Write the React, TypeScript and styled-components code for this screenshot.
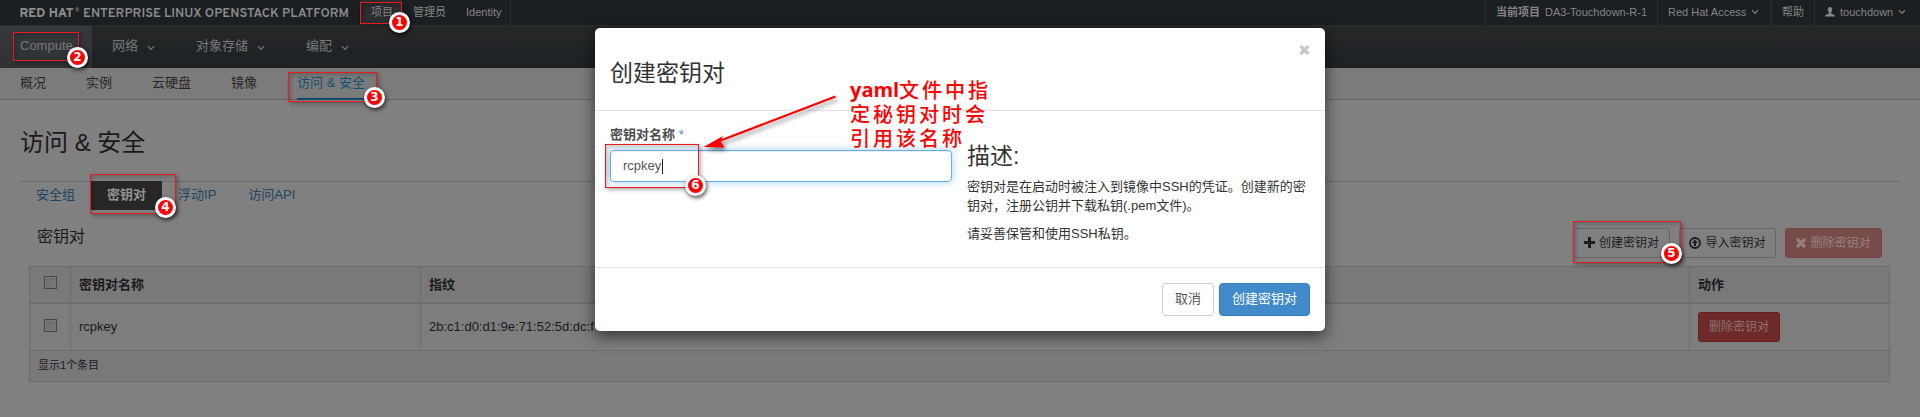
import React from "react";
import styled, { createGlobalStyle, css } from "styled-components";

const Global = createGlobalStyle`
  *, *::before, *::after { box-sizing: border-box; }
  html, body { margin: 0; padding: 0; background: #808080; overflow: hidden; }
  body { font: 13px/18px "Liberation Sans", "Noto Sans CJK SC", sans-serif; color: #1a1a1a; }
  h1, h2, h3, p { margin: 0; font-weight: 400; }
`;

const Page = styled.div`
  position: relative;
  width: 1920px;
  height: 417px;
  overflow: hidden;
  background: #808080;
`;

const TopBar = styled.header`
  display: flex;
  height: 26px;
  background: #1b1f22;
  border-bottom: 1px solid #272c2f;
  color: #848586;
  font-size: 11px;
  line-height: 24px;
`;

const Brand = styled.svg`
  flex: none;
  width: 360px;
  height: 25px;
`;

const TopTab = styled.div<{ $active?: boolean; $width: number; $divider?: boolean }>`
  width: ${(p) => p.$width}px;
  padding-left: 11px;
  white-space: nowrap;
  ${(p) => p.$active && css`background: #2b2d30;`}
  ${(p) => p.$divider && css`border-right: 1px solid #292d30;`}
`;

const TopRight = styled.div`
  display: flex;
  margin-left: auto;
`;

const TopItem = styled.div<{ $width: number }>`
  display: flex;
  align-items: center;
  gap: 5px;
  width: ${(p) => p.$width}px;
  height: 25px;
  padding: 0 0 1px 10px;
  border-left: 1px solid #292d30;
  white-space: nowrap;
`;

const MainNav = styled.nav`
  display: flex;
  height: 42px;
  background: linear-gradient(#262729, #1d2123);
  color: #777879;
`;

const NavItem = styled.div<{ $active?: boolean; $width: number }>`
  display: flex;
  align-items: center;
  gap: 9px;
  width: ${(p) => p.$width}px;
  padding: 0 0 2px 20px;
  white-space: nowrap;
  svg { margin-top: 3px; }
  ${(p) => p.$active && css`background: linear-gradient(#36383b, #2f3235);`}
`;

const SubNav = styled.nav`
  display: flex;
  gap: 40px;
  height: 32px;
  padding-left: 20px;
  background: #7b7b7b;
  border-bottom: 1px solid #686868;
`;

const SubItem = styled.div<{ $active?: boolean }>`
  height: 32px;
  line-height: 29px;
  color: #262626;
  ${(p) => p.$active && css`
    width: 70px;
    color: #124f6f;
    border-bottom: 2px solid #12496b;
  `}
`;

const Content = styled.main`
  padding: 27px 20px 0;
`;

const PageTitle = styled.h1`
  height: 54px;
  font-size: 24px;
  line-height: 32px;
`;

const Tabs = styled.div`
  display: flex;
  height: 29px;
  border-top: 1px solid #6c6c6c;
`;

const Tab = styled.div<{ $active?: boolean }>`
  height: 29px;
  margin-top: -1px;
  padding: 0 16px;
  line-height: 28px;
  color: #204462;
  ${(p) => p.$active && css`
    color: #929292;
    background: #272727;
    font-weight: 700;
  `}
`;

const Panel = styled.section`
  padding: 18px 10px 0 9px;
`;

const PanelHead = styled.div`
  display: flex;
  justify-content: space-between;
  height: 38px;
  padding: 0 8px;
`;

const PanelTitle = styled.h2`
  font-size: 16px;
  line-height: 18px;
`;

const Actions = styled.div`
  display: flex;
  gap: 9px;
`;

const ActionButton = styled.button<{ $tone?: "danger" | "faded" }>`
  display: flex;
  align-items: center;
  justify-content: center;
  gap: 4px;
  width: 97px;
  height: 30px;
  padding: 0 0 1px;
  font: 12px/18px "Liberation Sans", "Noto Sans CJK SC", sans-serif;
  color: #1d1d1d;
  background: transparent;
  border: 1px solid #666;
  border-radius: 3px;
  white-space: nowrap;
  ${(p) => p.$tone === "danger" && css`
    width: 82px;
    color: #8b7272;
    background: #6d2a28;
    border-color: #6b1f1d;
  `}
  ${(p) => p.$tone === "faded" && css`
    color: #998080;
    background: #764b4a;
    border-color: #754544;
  `}
`;

const Grid = styled.div`
  border: 1px solid #6d6d6d;
`;

const GridRow = styled.div<{ $head?: boolean }>`
  display: grid;
  grid-template-columns: 40px 350px 1fr 200px;
  height: ${(p) => (p.$head ? 37 : 47)}px;
  border-bottom: ${(p) => (p.$head ? 2 : 1)}px solid #6d6d6d;
  ${(p) => p.$head && css`
    background: #797979;
    font-weight: 700;
  `}
  ${(p) => !p.$head && css`background: #7d7d7d;`}
`;

const Cell = styled.div<{ $check?: boolean }>`
  display: flex;
  align-items: center;
  padding-left: ${(p) => (p.$check ? 14 : 8)}px;
  padding-bottom: ${(p) => (p.$check ? 4 : 0)}px;
  & + & { border-left: 1px solid #6d6d6d; }
`;

const Check = styled.span`
  width: 13px;
  height: 13px;
  border: 1px solid #484848;
  background: linear-gradient(135deg, #666a6e, #7c7c7c);
  box-shadow: inset 0 0 0 1px #7b7b7b, inset 0 0 0 2px #6c6e70;
`;

const GridFoot = styled.div`
  height: 30px;
  padding-left: 8px;
  background: #797979;
  font-size: 11px;
  line-height: 28px;
`;

const Modal = styled.section`
  position: absolute;
  left: 595px;
  top: 28px;
  width: 730px;
  height: 303px;
  background: #fff;
  border-radius: 5px;
  box-shadow: 0 5px 15px rgba(0, 0, 0, 0.6);
  color: #333;
`;

const ModalHead = styled.div`
  display: flex;
  justify-content: space-between;
  height: 83px;
  padding: 0 15px;
  border-bottom: 1px solid #e2e2e2;
`;

const ModalTitle = styled.h3`
  padding-top: 29px;
  font-size: 23px;
  line-height: 32px;
`;

const Close = styled.span`
  padding-top: 17px;
  line-height: 0;
  color: #c8c8c8;
`;

const ModalBody = styled.div`
  display: flex;
  gap: 15px;
  height: 157px;
  padding: 15px;
  border-bottom: 1px solid #e2e2e2;
`;

const Field = styled.div`
  width: 342px;
`;

const Label = styled.div`
  height: 24px;
  font-weight: 700;
  color: #4d4d4d;
  span { color: #428bca; font-weight: 400; }
`;

const Input = styled.div`
  display: flex;
  align-items: center;
  height: 32px;
  padding-left: 12px;
  border: 1px solid #66afe9;
  border-radius: 4px;
  box-shadow: inset 0 1px 1px rgba(0, 0, 0, 0.075), 0 0 8px rgba(102, 175, 233, 0.6);
  color: #555;
`;

const Caret = styled.i`
  width: 1px;
  height: 15px;
  margin-left: 1px;
  background: #222;
`;

const Help = styled.div`
  flex: 1;
  padding-top: 14px;
  line-height: 19px;
  h3 { height: 37px; font-size: 23px; line-height: 32px; }
  p { margin-bottom: 9px; white-space: nowrap; }
`;

const ModalFoot = styled.div`
  display: flex;
  justify-content: flex-end;
  gap: 5px;
  padding: 15px;
`;

const DialogButton = styled.button<{ $primary?: boolean }>`
  width: ${(p) => (p.$primary ? 91 : 52)}px;
  height: 33px;
  padding: 0 0 1px;
  font: 13px/18px "Liberation Sans", "Noto Sans CJK SC", sans-serif;
  color: ${(p) => (p.$primary ? "#fff" : "#555")};
  background: ${(p) => (p.$primary ? "#428bca" : "#fff")};
  border: 1px solid ${(p) => (p.$primary ? "#357ebd" : "#ccc")};
  border-radius: 4px;
  white-space: nowrap;
`;

const Frame = styled.div<{ $x: number; $y: number; $w: number; $h: number }>`
  position: absolute;
  left: ${(p) => p.$x}px;
  top: ${(p) => p.$y}px;
  width: ${(p) => p.$w}px;
  height: ${(p) => p.$h}px;
  border: 1px solid #e81c1c;
  box-shadow: 2px 2px 4px rgba(0, 0, 0, 0.3), inset 2px 2px 4px rgba(0, 0, 0, 0.2);
`;

const Badge = styled.div<{ $x: number; $y: number }>`
  position: absolute;
  left: ${(p) => p.$x - 10.5}px;
  top: ${(p) => p.$y - 10.5}px;
  width: 21px;
  height: 21px;
  border: 3px solid #fff;
  border-radius: 50%;
  background: #f00;
  box-shadow: 1px 2px 4px rgba(0, 0, 0, 0.7);
  color: #fff;
  font: 700 12px/15px "DejaVu Sans", sans-serif;
  text-align: center;
`;

const Note = styled.div`
  position: absolute;
  left: 850px;
  top: 78px;
  color: #f00;
  font: 500 20px/24px "Noto Sans CJK SC", sans-serif;
  letter-spacing: 3px;
  white-space: nowrap;
`;

const NoteLine = styled.div`
  display: flex;
  height: 24px;
`;

const Latin = styled.span`
  width: 49px;
  font: 700 20px/24px "Open Sans", sans-serif;
  letter-spacing: 0;
`;

const Arrow = styled.svg`
  position: absolute;
  left: 695px;
  top: 85px;
  filter: drop-shadow(2px 3px 2px rgba(0, 0, 0, 0.45));
`;

const Chevron = () => (
  <svg width="8" height="6" viewBox="0 0 8 6" fill="none" stroke="currentColor" strokeWidth="1.2">
    <path d="M1 1.2 4 4.4 7 1.2" />
  </svg>
);

const marks = [
  { n: 1, x: 360, y: 2, w: 42, h: 22, cx: 399.5, cy: 22.5 },
  { n: 2, x: 13, y: 32, w: 66, h: 29, cx: 77.5, cy: 57.5 },
  { n: 3, x: 288, y: 72, w: 89, h: 30, cx: 374.5, cy: 97.5 },
  { n: 4, x: 90, y: 174, w: 86, h: 40, cx: 165.5, cy: 207.5 },
  { n: 5, x: 1573, y: 221, w: 108, h: 42, cx: 1671.5, cy: 253.5 },
  { n: 6, x: 605, y: 144, w: 94, h: 44, cx: 695.5, cy: 185.5 },
];

export default function App() {
  return (
    <Page>
      <Global />
      <TopBar>
        <Brand viewBox="0 0 360 25" fill="#8b8c8d" fontFamily="Overpass, 'Open Sans', sans-serif" fontSize="12.5">
          <text x="19.5" y="17" fontWeight="800" textLength="54" lengthAdjust="spacingAndGlyphs">RED HAT</text>
          <text x="75" y="12" fontSize="5">®</text>
          <text x="83" y="17" fontWeight="600" textLength="266" lengthAdjust="spacingAndGlyphs">ENTERPRISE LINUX OPENSTACK PLATFORM</text>
        </Brand>
        <TopTab $active $width={42}>项目</TopTab>
        <TopTab $width={53}>管理员</TopTab>
        <TopTab $width={56} $divider>Identity</TopTab>
        <TopRight>
          <TopItem $width={172}><b>当前项目</b>DA3-Touchdown-R-1</TopItem>
          <TopItem $width={114}>Red Hat Access <Chevron /></TopItem>
          <TopItem $width={43}>帮助</TopItem>
          <TopItem $width={106}>
            <svg width="10" height="10" viewBox="0 0 10 10" fill="currentColor">
              <path d="M5 0C3.4 0 2.7 1.2 2.8 2.7c.1 1.4.6 2 1.1 2.6v1.2L.6 7.9C.1 8.2 0 8.8 0 9.6h10c0-.8-.1-1.4-.6-1.7L6.1 6.5V5.3c.5-.6 1-1.200 1.1-2.6C7.300 1.2 6.6 0 5 0z" />
            </svg>
            touchdown <Chevron />
          </TopItem>
        </TopRight>
      </TopBar>
      <MainNav>
        <NavItem $active $width={92}>Compute</NavItem>
        <NavItem $width={84}>网络<Chevron /></NavItem>
        <NavItem $width={110}>对象存储<Chevron /></NavItem>
        <NavItem $width={84}>编配<Chevron /></NavItem>
      </MainNav>
      <SubNav>
        <SubItem>概况</SubItem>
        <SubItem>实例</SubItem>
        <SubItem>云硬盘</SubItem>
        <SubItem>镜像</SubItem>
        <SubItem $active>访问 &amp; 安全</SubItem>
      </SubNav>
      <Content>
        <PageTitle>访问 &amp; 安全</PageTitle>
        <Tabs>
          <Tab>安全组</Tab>
          <Tab $active>密钥对</Tab>
          <Tab>浮动IP</Tab>
          <Tab>访问API</Tab>
        </Tabs>
        <Panel>
          <PanelHead>
            <PanelTitle>密钥对</PanelTitle>
            <Actions>
              <ActionButton>
                <svg width="11" height="11" viewBox="0 0 11 11" fill="currentColor">
                  <path d="M4 0h3v4h4v3H7v4H4V7H0V4h4z" />
                </svg>
                创建密钥对
              </ActionButton>
              <ActionButton>
                <svg width="12" height="12" viewBox="0 0 12 12" fill="none" stroke="currentColor">
                  <circle cx="6" cy="6" r="5" strokeWidth="1.8" />
                  <path d="M6 2.5 9 6H7v3H5V6H3z" fill="currentColor" stroke="none" />
                </svg>
                导入密钥对
              </ActionButton>
              <ActionButton $tone="faded">
                <svg width="10" height="10" viewBox="0 0 10 10" stroke="currentColor" strokeWidth="3.2">
                  <path d="M1 1l8 8M9 1L1 9" />
                </svg>
                删除密钥对
              </ActionButton>
            </Actions>
          </PanelHead>
          <Grid>
            <GridRow $head>
              <Cell $check><Check /></Cell>
              <Cell>密钥对名称</Cell>
              <Cell>指纹</Cell>
              <Cell>动作</Cell>
            </GridRow>
            <GridRow>
              <Cell $check><Check /></Cell>
              <Cell>rcpkey</Cell>
              <Cell>2b:c1:d0:d1:9e:71:52:5d:dc:f</Cell>
              <Cell><ActionButton $tone="danger">删除密钥对</ActionButton></Cell>
            </GridRow>
            <GridFoot>显示1个条目</GridFoot>
          </Grid>
        </Panel>
      </Content>
      <Modal>
        <ModalHead>
          <ModalTitle>创建密钥对</ModalTitle>
          <Close>
            <svg width="11" height="10" viewBox="0 0 11 10" stroke="currentColor" strokeWidth="3.2">
              <path d="M1.5 1l8 8M9.5 1l-8 8" />
            </svg>
          </Close>
        </ModalHead>
        <ModalBody>
          <Field>
            <Label>密钥对名称 <span>*</span></Label>
            <Input>rcpkey<Caret /></Input>
          </Field>
          <Help>
            <h3>描述:</h3>
            <p>密钥对是在启动时被注入到镜像中SSH的凭证。创建新的密<br />钥对，注册公钥并下载私钥(.pem文件)。</p>
            <p>请妥善保管和使用SSH私钥。</p>
          </Help>
        </ModalBody>
        <ModalFoot>
          <DialogButton>取消</DialogButton>
          <DialogButton $primary>创建密钥对</DialogButton>
        </ModalFoot>
      </Modal>
      {marks.map((m) => (
        <React.Fragment key={m.n}>
          <Frame $x={m.x} $y={m.y} $w={m.w} $h={m.h} />
          <Badge $x={m.cx} $y={m.cy}>{m.n}</Badge>
        </React.Fragment>
      ))}
      <Arrow width="150" height="80" viewBox="695 85 150 80">
        <path d="M835.5 96.5 718 141.5" stroke="#f00" strokeWidth="2.2" />
        <path d="M703.5 147 723 136 720.5 141 724.500 147.500z" fill="#f00" />
      </Arrow>
      <Note>
        <NoteLine><Latin>yaml</Latin>文件中指</NoteLine>
        <NoteLine>定秘钥对时会</NoteLine>
        <NoteLine>引用该名称</NoteLine>
      </Note>
    </Page>
  );
}
